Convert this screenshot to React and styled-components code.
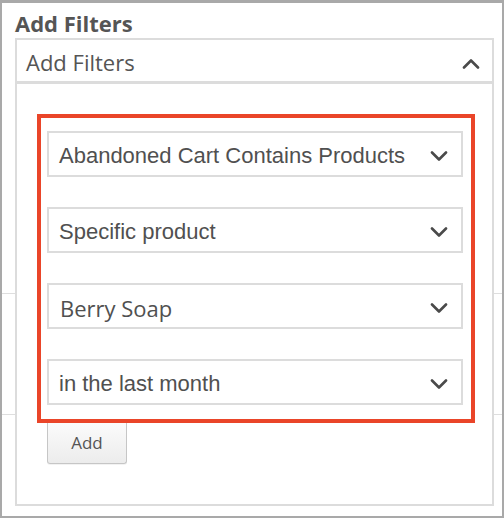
import React from "react";
import styled, { createGlobalStyle } from "styled-components";

const Global = createGlobalStyle`
  html, body { margin: 0; padding: 0; background: #fff; }
  * { box-sizing: border-box; }
`;

const Frame = styled.div`
  width: 504px;
  height: 518px;
  border: 2px solid #a9a9a9;
  border-top-width: 3px;
  padding: 7px 8px 0 13px;
  background-color: #fff;
  background-image: linear-gradient(#dedede, #dedede), linear-gradient(#dedede, #dedede);
  background-size: 100% 1px, 100% 1px;
  background-position: 0 290px, 0 411px;
  background-repeat: no-repeat;
  overflow: hidden;
`;

const Heading = styled.div`
  font-family: "Open Sans", sans-serif;
  font-weight: 700;
  font-size: 22px;
  line-height: 26px;
  color: #555;
  margin-bottom: 2px;
`;

const Header = styled.div`
  height: 45px;
  border: 2px solid #dcdcdc;
  background: #fff;
  display: flex;
  align-items: center;
  justify-content: space-between;
  padding: 2px 12px 0 9px;
`;

const HeaderText = styled.span`
  font-family: "Open Sans", sans-serif;
  font-size: 22px;
  line-height: 30px;
  color: #555;
`;

const Chevron = styled.svg`
  display: block;
  flex: none;
  margin-top: ${(p) => p.$offset || 0}px;
`;

const Panel = styled.div`
  height: 423px;
  border: 2px solid #dcdcdc;
  border-top-width: 1px;
  background: #fff;
  padding: 30px 17px 0 20px;
`;

const Highlight = styled.div`
  border: 4px solid #ea4529;
  padding: 13px 8px 14px 6px;
  display: flex;
  flex-direction: column;
  gap: 30px;
`;

const Select = styled.div`
  height: 46px;
  border: 2px solid #dcdcdc;
  background: #fff;
  display: flex;
  align-items: center;
  justify-content: space-between;
  padding: 3px 13px 0 ${(p) => (p.$alt ? 11 : 10)}px;
`;

const SelectText = styled.span`
  font-family: ${(p) => (p.$alt ? '"Open Sans", sans-serif' : '"Liberation Sans", Arial, sans-serif')};
  font-size: 22px;
  color: #505050;
  white-space: nowrap;
`;

const AddButton = styled.button`
  display: block;
  margin: 0 0 0 10px;
  width: 80px;
  height: 41px;
  border: 1px solid #c6c6c6;
  border-top: none;
  border-radius: 0 0 3px 3px;
  background: linear-gradient(#fbfbfb, #ececec);
  box-shadow: 0 1px 0 rgba(0, 0, 0, 0.05);
  font-family: "Open Sans", sans-serif;
  font-size: 17px;
  color: #555;
  padding: 0 0 2px;
`;

const Up = () => (
  <Chevron width="18" height="11" viewBox="0 0 18 11" $offset={4}>
    <path d="M2 9.5 L9 2.5 L16 9.5" fill="none" stroke="#4a4a4a" strokeWidth="2.6" strokeLinecap="round" strokeLinejoin="round" />
  </Chevron>
);

const Down = () => (
  <Chevron width="18" height="11" viewBox="0 0 18 11" $offset={2}>
    <path d="M2 1.5 L9 8.5 L16 1.5" fill="none" stroke="#4a4a4a" strokeWidth="2.6" strokeLinecap="round" strokeLinejoin="round" />
  </Chevron>
);

const filters = [
  { label: "Abandoned Cart Contains Products" },
  { label: "Specific product" },
  { label: "Berry Soap", alt: true },
  { label: "in the last month" },
];

export default function App() {
  return (
    <>
      <Global />
      <Frame>
        <Heading>Add Filters</Heading>
        <Header>
          <HeaderText>Add Filters</HeaderText>
          <Up />
        </Header>
        <Panel>
          <Highlight>
            {filters.map((f) => (
              <Select key={f.label} $alt={f.alt}>
                <SelectText $alt={f.alt}>{f.label}</SelectText>
                <Down />
              </Select>
            ))}
          </Highlight>
          <AddButton>Add</AddButton>
        </Panel>
      </Frame>
    </>
  );
}
